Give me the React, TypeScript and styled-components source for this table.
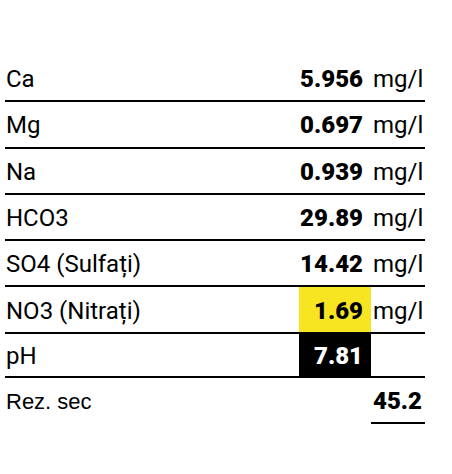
import React from "react";
import styled, { createGlobalStyle } from "styled-components";

const Global = createGlobalStyle`
  html, body { margin: 0; padding: 0; background: #fff; }
  body { font-family: Roboto, "Liberation Sans", sans-serif; color: #000; }
`;

const Page = styled.div`
  padding: 56px 27px 0 5px;
  width: 452px;
  box-sizing: border-box;
`;

const Row = styled.div<{ $noLine?: boolean; $short?: boolean }>`
  display: grid;
  grid-template-columns: 1fr 72px 54px;
  height: ${(p) => (p.$short ? "44px" : "46.3px")};
  box-sizing: border-box;
  border-bottom: ${(p) => (p.$noLine ? "none" : "2px solid #000")};
`;

const Label = styled.div<{ $plain?: boolean }>`
  display: flex;
  align-items: center;
  font-family: ${(p) => (p.$plain ? '"Liberation Sans", Arial, sans-serif' : 'Roboto, "Liberation Sans", sans-serif')};
  font-size: ${(p) => (p.$plain ? "22px" : "24px")};
  font-weight: 400;
  padding: 2px 0 0 1px;
`;

type Tone = "none" | "yellow" | "black";

const Value = styled.div<{ $tone: Tone }>`
  display: flex;
  align-items: center;
  justify-content: flex-end;
  padding: 2px 8px 0 0;
  font-size: 24px;
  font-weight: 900;
  background: ${(p) => (p.$tone === "yellow" ? "#f6e520" : p.$tone === "black" ? "#000" : "transparent")};
  color: ${(p) => (p.$tone === "black" ? "#fff" : "#000")};
`;

const Unit = styled.div`
  display: flex;
  align-items: center;
  padding: 2px 0 0 2px;
  font-size: 24px;
  font-weight: 400;
`;

const Total = styled.div`
  display: flex;
  align-items: center;
  justify-content: flex-end;
  padding: 2px 3px 0 0;
  font-size: 24px;
  font-weight: 900;
  border-bottom: 2px solid #000;
`;

const rows: { label: string; value: string; unit?: string; tone: Tone }[] = [
  { label: "Ca", value: "5.956", unit: "mg/l", tone: "none" },
  { label: "Mg", value: "0.697", unit: "mg/l", tone: "none" },
  { label: "Na", value: "0.939", unit: "mg/l", tone: "none" },
  { label: "HCO3", value: "29.89", unit: "mg/l", tone: "none" },
  { label: "SO4 (Sulfați)", value: "14.42", unit: "mg/l", tone: "none" },
  { label: "NO3 (Nitrați)", value: "1.69", unit: "mg/l", tone: "yellow" },
  { label: "pH", value: "7.81", tone: "black" },
];

export default function App() {
  return (
    <Page>
      <Global />
      {rows.map((r) => (
        <Row key={r.label} $short={!r.unit}>
          <Label>{r.label}</Label>
          <Value $tone={r.tone}>{r.value}</Value>
          <Unit>{r.unit ?? ""}</Unit>
        </Row>
      ))}
      <Row $noLine>
        <Label $plain>Rez. sec</Label>
        <div />
        <Total>45.2</Total>
      </Row>
    </Page>
  );
}
